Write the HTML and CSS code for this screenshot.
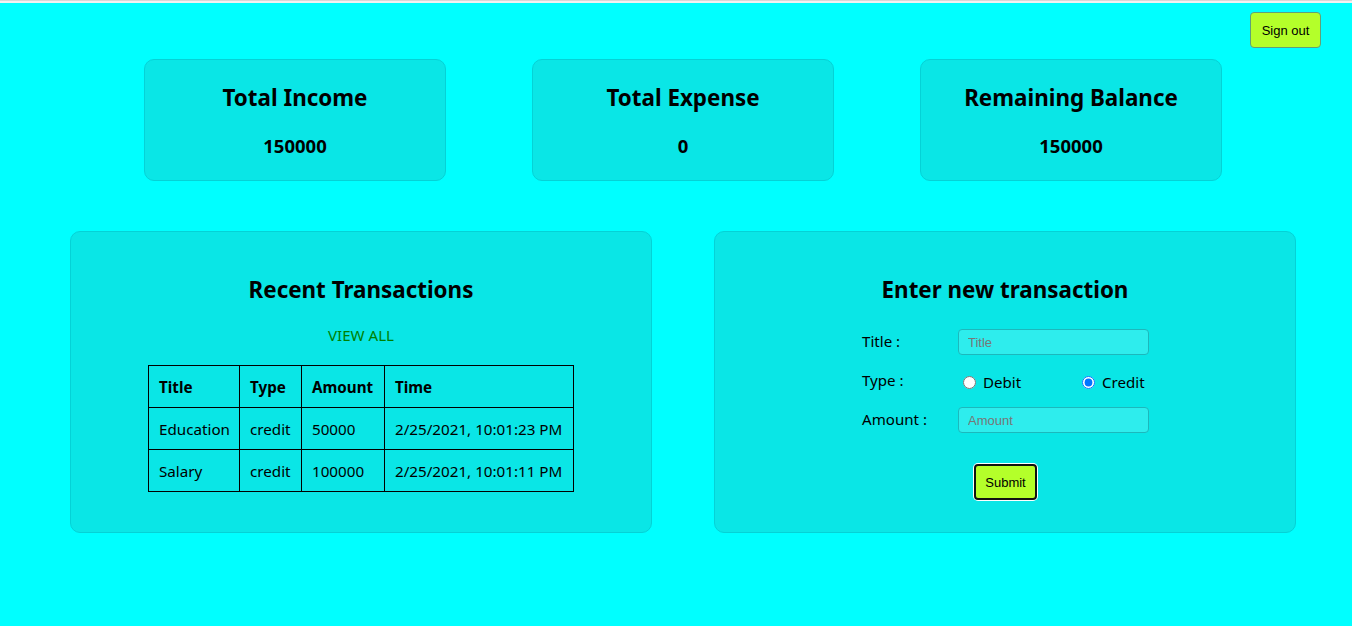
FILE: index.html
```html
<!DOCTYPE html>
<html>
<head>
<meta charset="utf-8">
<link rel="stylesheet" href="styles.css">
</head>
<body>
<div class="topline"></div>
<header class="topbar">
  <button class="signout">Sign out</button>
</header>
<section class="summary">
  <div class="card">
    <h2>Total Income</h2>
    <div class="value">150000</div>
  </div>
  <div class="card">
    <h2>Total Expense</h2>
    <div class="value">0</div>
  </div>
  <div class="card">
    <h2>Remaining Balance</h2>
    <div class="value">150000</div>
  </div>
</section>
<section class="panels">
  <div class="panel">
    <h2>Recent Transactions</h2>
    <a class="viewall" href="#">VIEW ALL</a>
    <table class="tx">
      <colgroup>
        <col class="c1"><col class="c2"><col class="c3"><col class="c4">
      </colgroup>
      <thead>
        <tr><th>Title</th><th>Type</th><th>Amount</th><th>Time</th></tr>
      </thead>
      <tbody>
        <tr><td>Education</td><td>credit</td><td>50000</td><td>2/25/2021, 10:01:23 PM</td></tr>
        <tr><td>Salary</td><td>credit</td><td>100000</td><td>2/25/2021, 10:01:11 PM</td></tr>
      </tbody>
    </table>
  </div>
  <div class="panel">
    <h2>Enter new transaction</h2>
    <form class="txform">
      <div class="row">
        <label class="lbl">Title :</label>
        <input class="field" type="text" placeholder="Title">
      </div>
      <div class="row">
        <span class="lbl">Type :</span>
        <div class="radios">
          <label class="opt debit"><input type="radio" name="type"> Debit</label>
          <label class="opt"><input type="radio" name="type" checked> Credit</label>
        </div>
      </div>
      <div class="row">
        <label class="lbl">Amount :</label>
        <input class="field" type="text" placeholder="Amount">
      </div>
      <div class="actions">
        <button type="button" class="submit">Submit</button>
      </div>
    </form>
  </div>
</section>
</body>
</html>
```
FILE: styles.css
```css
html, body {
  margin: 0;
  padding: 0;
  background: #00ffff;
  font-family: "Noto Sans", "Open Sans", sans-serif;
  color: #000;
}
.topline {
  height: 3px;
  background: #f2f2f2;
  border-top: 1px solid #d6d6d6;
  box-sizing: border-box;
}
.topbar {
  display: flex;
  justify-content: flex-end;
  padding: 9px 31px 0 0;
  height: 56px;
  box-sizing: border-box;
}
.signout {
  width: 71px;
  height: 36px;
  background: #b4ff2a;
  border: 1px solid #5fa07a;
  border-radius: 4px;
  font-family: "Liberation Sans", Arial, sans-serif;
  font-size: 13px;
  color: #000;
  padding: 0;
}
.summary {
  display: flex;
  gap: 86px;
  justify-content: center;
  padding-left: 14px;
}
.card {
  width: 302px;
  height: 122px;
  box-sizing: border-box;
  background: #0ae6e6;
  border: 1px solid #05d2d6;
  border-radius: 10px;
  padding-top: 22px;
  text-align: center;
}
.card h2, .panel h2 {
  margin: 0;
  font-size: 22.4px;
  line-height: 32px;
  font-weight: 700;
}
.card .value {
  margin-top: 20px;
  font-size: 18.5px;
  line-height: 24px;
  font-weight: 700;
}
.panels {
  display: flex;
  gap: 62px;
  justify-content: center;
  padding-left: 14px;
  margin-top: 50px;
}
.panel {
  width: 582px;
  height: 302px;
  box-sizing: border-box;
  background: #0ae6e6;
  border: 1px solid #05d2d6;
  border-radius: 10px;
  padding-top: 42px;
  display: flex;
  flex-direction: column;
  align-items: center;
}
.viewall {
  margin-top: 18px;
  font-size: 15.1px;
  line-height: 22px;
  color: #008000;
  text-decoration: none;
}
.tx {
  margin-top: 19px;
  border-collapse: collapse;
  table-layout: fixed;
  width: 425px;
  font-size: 15.2px;
}
.tx .c1 { width: 91px; }
.tx .c2 { width: 62px; }
.tx .c3 { width: 83px; }
.tx .c4 { width: 189px; }
.tx th, .tx td {
  border: 1px solid #000;
  height: 42px;
  padding: 0 0 0 10px;
  text-align: left;
  white-space: nowrap;
  box-sizing: border-box;
}
.tx th { font-weight: 700; }
.txform {
  margin-top: 23px;
  width: 287px;
  display: flex;
  flex-direction: column;
  gap: 13px;
  padding-left: 1px;
}
.row {
  display: flex;
  align-items: center;
  height: 26px;
}
.lbl {
  width: 96px;
  font-size: 15.1px;
  line-height: 22px;
  margin-top: -3px;
}
.field {
  width: 191px;
  height: 26px;
  box-sizing: border-box;
  background: #2eeded;
  border: 1px solid #1cb8bc;
  border-radius: 4px;
  padding: 0 9px;
  font-family: "Liberation Sans", Arial, sans-serif;
  font-size: 13px;
  color: #000;
}
.field::placeholder { color: #777; }
.radios {
  display: flex;
  align-items: center;
  margin-top: 2px;
}
.opt {
  font-size: 15.1px;
  line-height: 22px;
  display: flex;
  align-items: center;
  gap: 4px;
}
.opt input {
  margin: 0 3px 0 5px;
  width: 13px;
  height: 13px;
}
.debit { width: 119px; }
.actions {
  display: flex;
  justify-content: center;
  margin-top: 18px;
}
.submit {
  width: 63px;
  height: 36px;
  background: #b4ff2a;
  border: 2px solid #111;
  border-radius: 4px;
  box-shadow: 0 0 0 1px #fff;
  font-family: "Liberation Sans", Arial, sans-serif;
  font-size: 13px;
  color: #000;
  padding: 0;
}
```
